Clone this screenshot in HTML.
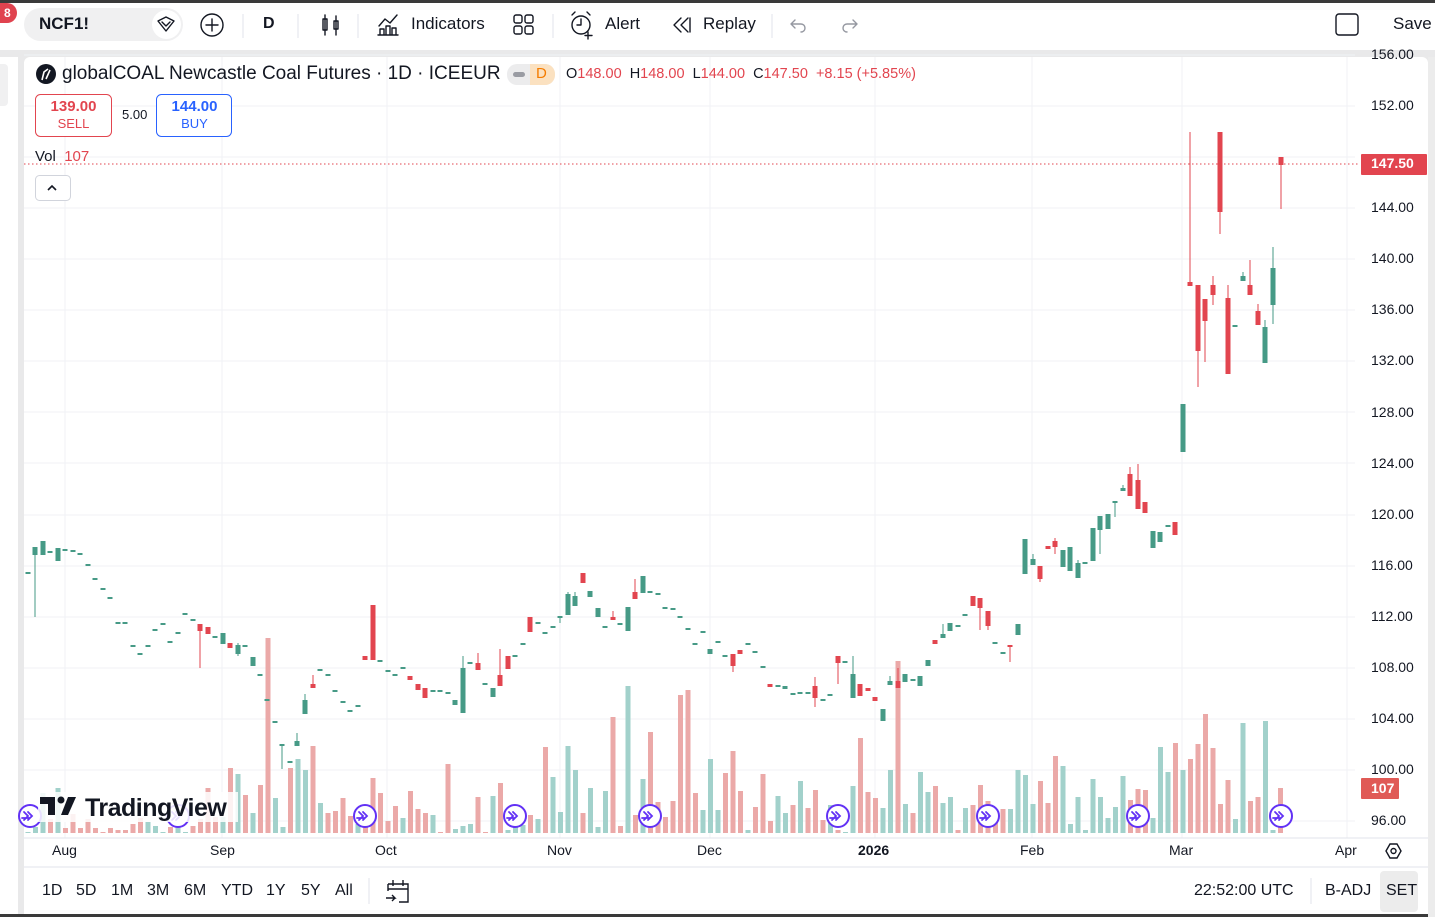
<!DOCTYPE html>
<html><head><meta charset="utf-8"><style>
*{margin:0;padding:0;box-sizing:border-box}
body{width:1435px;height:917px;overflow:hidden;background:#e9e9ea;font-family:"Liberation Sans",sans-serif;color:#131722;position:relative}
.a{position:absolute}
.t{position:absolute;white-space:nowrap}
</style></head><body>
<!-- top bar -->
<div class="a" style="left:0;top:0;width:1435px;height:3px;background:#3a3a3a"></div>
<div class="a" style="left:0;top:3px;width:1435px;height:47px;background:#fff"></div>
<div class="a" style="left:24px;top:8px;width:159px;height:33px;border-radius:17px;background:#f0f0f1"></div>
<div class="t" style="left:39px;top:14px;font-size:17px;font-weight:bold">NCF1!</div>
<div class="a" style="left:152px;top:10px;width:29px;height:29px;border-radius:50%;background:#fff"></div>
<div class="a" style="left:0;top:3px;width:17px;height:20px;border-radius:0 10px 10px 0;background:#e0434f;color:#fff;font-size:12px;font-weight:bold;padding:3px 0 0 4px">8</div>
<div class="t" style="left:263px;top:15px;font-size:16px;font-weight:bold">D</div>
<div class="t" style="left:411px;top:14px;font-size:17px">Indicators</div>
<div class="t" style="left:605px;top:14px;font-size:17px">Alert</div>
<div class="t" style="left:703px;top:14px;font-size:17px">Replay</div>
<div class="t" style="left:1393px;top:14px;font-size:17px">Save</div>
<!-- left panel -->
<div class="a" style="left:0;top:57px;width:18px;height:860px;background:#fff"></div>
<div class="a" style="left:0;top:64px;width:8px;height:42px;background:#f0f0f1;border-radius:0 4px 4px 0"></div>
<!-- chart panel -->
<div class="a" style="left:24px;top:57px;width:1404px;height:858px;background:#fff;border-radius:6px 6px 0 0"></div>
<div class="a" style="left:0;top:914px;width:1435px;height:3px;background:#3a3a3a"></div>

<svg class="a" style="left:0;top:0" width="1435" height="917" xmlns="http://www.w3.org/2000/svg">
<g fill="none" stroke="#131722" stroke-width="1.4" stroke-linecap="round" stroke-linejoin="round">
<path d="M158 21 L166 17 L174 21 L166 31 Z M162 22 L166 26 L170 22" />
<circle cx="212" cy="25" r="11"/><path d="M212 19v12M206 25h12"/>
<path d="M325 15v20M323 19h4v11h-4zM336 16v19M334 21h4v8h-4z"/>
<path d="M378 35h20M380 35v-6h4v6M386 35v-9h4v9M392 35v-7h4v7M379 26l6-7 5 4 7-8"/>
<rect x="514" y="15" width="8" height="8" rx="2"/><rect x="525" y="15" width="8" height="8" rx="2"/><rect x="514" y="26" width="8" height="8" rx="2"/><rect x="525" y="26" width="8" height="8" rx="2"/>
<circle cx="581" cy="25" r="9"/><path d="M581 19v6h-4M572 15l3-3M590 15l-3-3M588 32v7M585 35.5h7"/>
<path d="M681 18l-7 7 7 7M688 18l-7 7 7 7M690 18v14"/>
<path stroke="#9598a1" d="M795 20l-4 4 4 4M791 24h10a4 4 0 0 1 0 8"/>
<path stroke="#9598a1" d="M853 20l4 4-4 4M857 24h-10a4 4 0 0 0 0 8"/>
<rect x="1336" y="14" width="22" height="21" rx="3"/>
</g>
<g stroke="#e0e3eb"><path d="M243 14v24M298 14v24M358 14v24M553 14v24M772 14v24"/></g>
<!-- grid -->
<g stroke="#f0f2f5" stroke-width="1">
<path d="M24 55H1355M24 106H1355M24 157H1355M24 208H1355M24 259H1355M24 310H1355M24 361H1355M24 412H1355M24 463H1355M24 515H1355M24 566H1355M24 617H1355M24 668H1355M24 719H1355M24 770H1355M24 821H1355"/>
<path d="M65 57V838M222 57V838M387 57V838M560 57V838M710 57V838M875 57V838M1032 57V838M1182 57V838M1347 57V838"/>
</g>
<path d="M24 838H1428M24 867H1428" stroke="#e0e3eb"/>
<!-- volume -->
<g fill="#eba9a8" id="vr"></g>
<g>
<rect x="25.5" y="832" width="5" height="1" fill="#a2d1cb"/><rect x="33" y="827" width="5" height="6" fill="#a2d1cb"/><rect x="40.5" y="793" width="5" height="40" fill="#a2d1cb"/><rect x="48" y="819" width="5" height="14" fill="#eba9a8"/><rect x="55.5" y="788" width="5" height="45" fill="#a2d1cb"/><rect x="63" y="828" width="5" height="5" fill="#eba9a8"/><rect x="70.5" y="814" width="5" height="19" fill="#eba9a8"/><rect x="78" y="828" width="5" height="5" fill="#eba9a8"/><rect x="85.5" y="819" width="5" height="14" fill="#eba9a8"/><rect x="93" y="828" width="5" height="5" fill="#eba9a8"/><rect x="100.5" y="832" width="5" height="1" fill="#eba9a8"/><rect x="108" y="828" width="5" height="5" fill="#eba9a8"/><rect x="115.5" y="830" width="5" height="3" fill="#eba9a8"/><rect x="123" y="830" width="5" height="3" fill="#eba9a8"/><rect x="130.5" y="824" width="5" height="9" fill="#eba9a8"/><rect x="138" y="818" width="5" height="15" fill="#eba9a8"/><rect x="145.5" y="822" width="5" height="11" fill="#a2d1cb"/><rect x="153" y="826" width="5" height="7" fill="#a2d1cb"/><rect x="160.5" y="832" width="5" height="1" fill="#a2d1cb"/><rect x="168" y="827" width="5" height="6" fill="#eba9a8"/><rect x="175.5" y="827" width="5" height="6" fill="#a2d1cb"/><rect x="183" y="832" width="5" height="1" fill="#a2d1cb"/><rect x="190.5" y="826" width="5" height="7" fill="#eba9a8"/><rect x="198" y="819" width="5" height="14" fill="#eba9a8"/><rect x="205.5" y="788" width="5" height="45" fill="#eba9a8"/><rect x="213" y="817" width="5" height="16" fill="#eba9a8"/><rect x="220.5" y="817" width="5" height="16" fill="#a2d1cb"/><rect x="228" y="768" width="5" height="65" fill="#eba9a8"/><rect x="235.5" y="774" width="5" height="59" fill="#a2d1cb"/><rect x="243" y="795" width="5" height="38" fill="#eba9a8"/><rect x="250.5" y="813" width="5" height="20" fill="#a2d1cb"/><rect x="258" y="785" width="5" height="48" fill="#eba9a8"/><rect x="265.5" y="638" width="5" height="195" fill="#eba9a8"/><rect x="273" y="798" width="5" height="35" fill="#a2d1cb"/><rect x="280.5" y="827" width="5" height="6" fill="#a2d1cb"/><rect x="288" y="768" width="5" height="65" fill="#eba9a8"/><rect x="295.5" y="759" width="5" height="74" fill="#a2d1cb"/><rect x="303" y="770" width="5" height="63" fill="#a2d1cb"/><rect x="310.5" y="746" width="5" height="87" fill="#eba9a8"/><rect x="318" y="803" width="5" height="30" fill="#a2d1cb"/><rect x="325.5" y="813" width="5" height="20" fill="#eba9a8"/><rect x="333" y="811" width="5" height="22" fill="#eba9a8"/><rect x="340.5" y="798" width="5" height="35" fill="#eba9a8"/><rect x="348" y="816" width="5" height="17" fill="#eba9a8"/><rect x="355.5" y="824" width="5" height="9" fill="#a2d1cb"/><rect x="363" y="822" width="5" height="11" fill="#eba9a8"/><rect x="370.5" y="778" width="5" height="55" fill="#eba9a8"/><rect x="378" y="793" width="5" height="40" fill="#eba9a8"/><rect x="385.5" y="821" width="5" height="12" fill="#eba9a8"/><rect x="393" y="806" width="5" height="27" fill="#eba9a8"/><rect x="400.5" y="818" width="5" height="15" fill="#a2d1cb"/><rect x="408" y="791" width="5" height="42" fill="#eba9a8"/><rect x="415.5" y="809" width="5" height="24" fill="#eba9a8"/><rect x="423" y="813" width="5" height="20" fill="#eba9a8"/><rect x="430.5" y="815" width="5" height="18" fill="#a2d1cb"/><rect x="438" y="832" width="5" height="1" fill="#eba9a8"/><rect x="445.5" y="764" width="5" height="69" fill="#eba9a8"/><rect x="453" y="829" width="5" height="4" fill="#a2d1cb"/><rect x="460.5" y="826" width="5" height="7" fill="#a2d1cb"/><rect x="468" y="824" width="5" height="9" fill="#a2d1cb"/><rect x="475.5" y="797" width="5" height="36" fill="#eba9a8"/><rect x="483" y="832" width="5" height="1" fill="#eba9a8"/><rect x="490.5" y="796" width="5" height="37" fill="#a2d1cb"/><rect x="498" y="783" width="5" height="50" fill="#eba9a8"/><rect x="505.5" y="830" width="5" height="3" fill="#a2d1cb"/><rect x="513" y="827" width="5" height="6" fill="#a2d1cb"/><rect x="520.5" y="825" width="5" height="8" fill="#a2d1cb"/><rect x="528" y="815" width="5" height="18" fill="#eba9a8"/><rect x="535.5" y="819" width="5" height="14" fill="#a2d1cb"/><rect x="543" y="747" width="5" height="86" fill="#eba9a8"/><rect x="550.5" y="777" width="5" height="56" fill="#a2d1cb"/><rect x="558" y="812" width="5" height="21" fill="#a2d1cb"/><rect x="565.5" y="746" width="5" height="87" fill="#a2d1cb"/><rect x="573" y="770" width="5" height="63" fill="#a2d1cb"/><rect x="580.5" y="813" width="5" height="20" fill="#eba9a8"/><rect x="588" y="788" width="5" height="45" fill="#a2d1cb"/><rect x="595.5" y="827" width="5" height="6" fill="#a2d1cb"/><rect x="603" y="791" width="5" height="42" fill="#a2d1cb"/><rect x="610.5" y="717" width="5" height="116" fill="#eba9a8"/><rect x="618" y="826" width="5" height="7" fill="#eba9a8"/><rect x="625.5" y="686" width="5" height="147" fill="#a2d1cb"/><rect x="633" y="815" width="5" height="18" fill="#eba9a8"/><rect x="640.5" y="779" width="5" height="54" fill="#a2d1cb"/><rect x="648" y="732" width="5" height="101" fill="#eba9a8"/><rect x="655.5" y="802" width="5" height="31" fill="#eba9a8"/><rect x="663" y="817" width="5" height="16" fill="#eba9a8"/><rect x="670.5" y="801" width="5" height="32" fill="#eba9a8"/><rect x="678" y="695" width="5" height="138" fill="#eba9a8"/><rect x="685.5" y="690" width="5" height="143" fill="#eba9a8"/><rect x="693" y="793" width="5" height="40" fill="#eba9a8"/><rect x="700.5" y="810" width="5" height="23" fill="#a2d1cb"/><rect x="708" y="759" width="5" height="74" fill="#a2d1cb"/><rect x="715.5" y="810" width="5" height="23" fill="#a2d1cb"/><rect x="723" y="773" width="5" height="60" fill="#eba9a8"/><rect x="730.5" y="751" width="5" height="82" fill="#eba9a8"/><rect x="738" y="791" width="5" height="42" fill="#eba9a8"/><rect x="745.5" y="830" width="5" height="3" fill="#a2d1cb"/><rect x="753" y="807" width="5" height="26" fill="#eba9a8"/><rect x="760.5" y="774" width="5" height="59" fill="#eba9a8"/><rect x="768" y="821" width="5" height="12" fill="#eba9a8"/><rect x="775.5" y="796" width="5" height="37" fill="#a2d1cb"/><rect x="783" y="813" width="5" height="20" fill="#a2d1cb"/><rect x="790.5" y="805" width="5" height="28" fill="#eba9a8"/><rect x="798" y="781" width="5" height="52" fill="#a2d1cb"/><rect x="805.5" y="808" width="5" height="25" fill="#eba9a8"/><rect x="813" y="790" width="5" height="43" fill="#eba9a8"/><rect x="820.5" y="820" width="5" height="13" fill="#eba9a8"/><rect x="828" y="805" width="5" height="28" fill="#a2d1cb"/><rect x="835.5" y="830" width="5" height="3" fill="#eba9a8"/><rect x="843" y="832" width="5" height="1" fill="#a2d1cb"/><rect x="850.5" y="786" width="5" height="47" fill="#a2d1cb"/><rect x="858" y="738" width="5" height="95" fill="#eba9a8"/><rect x="865.5" y="792" width="5" height="41" fill="#eba9a8"/><rect x="873" y="798" width="5" height="35" fill="#eba9a8"/><rect x="880.5" y="808" width="5" height="25" fill="#a2d1cb"/><rect x="888" y="770" width="5" height="63" fill="#a2d1cb"/><rect x="895.5" y="661" width="5" height="172" fill="#eba9a8"/><rect x="903" y="804" width="5" height="29" fill="#a2d1cb"/><rect x="910.5" y="813" width="5" height="20" fill="#eba9a8"/><rect x="918" y="772" width="5" height="61" fill="#a2d1cb"/><rect x="925.5" y="792" width="5" height="41" fill="#a2d1cb"/><rect x="933" y="786" width="5" height="47" fill="#eba9a8"/><rect x="940.5" y="803" width="5" height="30" fill="#a2d1cb"/><rect x="948" y="797" width="5" height="36" fill="#a2d1cb"/><rect x="955.5" y="830" width="5" height="3" fill="#eba9a8"/><rect x="963" y="808" width="5" height="25" fill="#a2d1cb"/><rect x="970.5" y="805" width="5" height="28" fill="#eba9a8"/><rect x="978" y="785" width="5" height="48" fill="#eba9a8"/><rect x="985.5" y="801" width="5" height="32" fill="#eba9a8"/><rect x="993" y="815" width="5" height="18" fill="#eba9a8"/><rect x="1000.5" y="809" width="5" height="24" fill="#eba9a8"/><rect x="1008" y="809" width="5" height="24" fill="#a2d1cb"/><rect x="1015.5" y="770" width="5" height="63" fill="#a2d1cb"/><rect x="1023" y="775" width="5" height="58" fill="#a2d1cb"/><rect x="1030.5" y="804" width="5" height="29" fill="#a2d1cb"/><rect x="1038" y="781" width="5" height="52" fill="#eba9a8"/><rect x="1045.5" y="803" width="5" height="30" fill="#eba9a8"/><rect x="1053" y="756" width="5" height="77" fill="#eba9a8"/><rect x="1060.5" y="766" width="5" height="67" fill="#a2d1cb"/><rect x="1068" y="824" width="5" height="9" fill="#a2d1cb"/><rect x="1075.5" y="797" width="5" height="36" fill="#a2d1cb"/><rect x="1083" y="830" width="5" height="3" fill="#a2d1cb"/><rect x="1090.5" y="779" width="5" height="54" fill="#a2d1cb"/><rect x="1098" y="797" width="5" height="36" fill="#a2d1cb"/><rect x="1105.5" y="818" width="5" height="15" fill="#a2d1cb"/><rect x="1113" y="807" width="5" height="26" fill="#a2d1cb"/><rect x="1120.5" y="776" width="5" height="57" fill="#a2d1cb"/><rect x="1128" y="800" width="5" height="33" fill="#eba9a8"/><rect x="1135.5" y="789" width="5" height="44" fill="#eba9a8"/><rect x="1143" y="790" width="5" height="43" fill="#eba9a8"/><rect x="1150.5" y="818" width="5" height="15" fill="#a2d1cb"/><rect x="1158" y="747" width="5" height="86" fill="#a2d1cb"/><rect x="1165.5" y="772" width="5" height="61" fill="#a2d1cb"/><rect x="1173" y="743" width="5" height="90" fill="#eba9a8"/><rect x="1180.5" y="770" width="5" height="63" fill="#a2d1cb"/><rect x="1188" y="759" width="5" height="74" fill="#eba9a8"/><rect x="1195.5" y="744" width="5" height="89" fill="#eba9a8"/><rect x="1203" y="714" width="5" height="119" fill="#eba9a8"/><rect x="1210.5" y="748" width="5" height="85" fill="#eba9a8"/><rect x="1218" y="804" width="5" height="29" fill="#eba9a8"/><rect x="1225.5" y="780" width="5" height="53" fill="#eba9a8"/><rect x="1233" y="819" width="5" height="14" fill="#a2d1cb"/><rect x="1240.5" y="723" width="5" height="110" fill="#a2d1cb"/><rect x="1248" y="801" width="5" height="32" fill="#eba9a8"/><rect x="1255.5" y="797" width="5" height="36" fill="#eba9a8"/><rect x="1263" y="721" width="5" height="112" fill="#a2d1cb"/><rect x="1270.5" y="830" width="5" height="3" fill="#a2d1cb"/><rect x="1278" y="788" width="5" height="45" fill="#eba9a8"/>
</g>
<!-- candles -->
<g id="c"></g>
<g fill="#469a86">
<rect x="25.5" y="572" width="5" height="2"/>
<rect x="32.5" y="547" width="5" height="8"/><rect x="34.5" y="555" width="1" height="62"/>
<rect x="40.5" y="541" width="5" height="14"/><rect x="47.5" y="551" width="5" height="2"/>
<rect x="55.5" y="548" width="5" height="13"/>
<rect x="62.5" y="549" width="5" height="2"/><rect x="70.5" y="550" width="5" height="2"/><rect x="77.5" y="553" width="5" height="2"/><rect x="85.5" y="564" width="5" height="2"/><rect x="92.5" y="578" width="5" height="2"/><rect x="100.5" y="588" width="5" height="2"/><rect x="107.5" y="597" width="5" height="2"/><rect x="115.5" y="622" width="5" height="2"/><rect x="122.5" y="622" width="5" height="2"/><rect x="130.5" y="645" width="5" height="2"/><rect x="137.5" y="653" width="5" height="2"/><rect x="145.5" y="645" width="5" height="2"/><rect x="152.5" y="629" width="5" height="2"/><rect x="160.5" y="623" width="5" height="2"/><rect x="167.5" y="641" width="5" height="2"/><rect x="175.5" y="632" width="5" height="2"/><rect x="182.5" y="613" width="5" height="2"/><rect x="190.5" y="619" width="5" height="2"/>
<rect x="212.5" y="636" width="5" height="2"/><rect x="220.5" y="633" width="5" height="11"/>
<rect x="235.5" y="645" width="5" height="9"/><rect x="237.5" y="643" width="1" height="13"/><rect x="242.5" y="645" width="5" height="2"/>
<rect x="250.5" y="657" width="5" height="9"/><rect x="257.5" y="674" width="5" height="2"/><rect x="264.5" y="699" width="5" height="2"/><rect x="272.5" y="721" width="5" height="2"/>
<rect x="279.5" y="744" width="5" height="2"/><rect x="281.5" y="744" width="1" height="25"/><rect x="287.5" y="761" width="5" height="2"/>
<rect x="294.5" y="741" width="5" height="5"/><rect x="296.5" y="733" width="1" height="10"/>
<rect x="302.5" y="700" width="5" height="14"/><rect x="304.5" y="694" width="1" height="8"/>
<rect x="317.5" y="669" width="5" height="2"/><rect x="325.5" y="674" width="5" height="2"/><rect x="332.5" y="690" width="5" height="2"/><rect x="340.5" y="701" width="5" height="2"/><rect x="347.5" y="710" width="5" height="2"/><rect x="355.5" y="705" width="5" height="2"/>
<rect x="377.5" y="660" width="5" height="2"/><rect x="385.5" y="670" width="5" height="2"/><rect x="392.5" y="674" width="5" height="2"/><rect x="400.5" y="667" width="5" height="2"/>
<rect x="430.5" y="690" width="5" height="2"/><rect x="437.5" y="690" width="5" height="2"/><rect x="445.5" y="692" width="5" height="2"/>
<rect x="452.5" y="700" width="5" height="5"/><rect x="460.5" y="668" width="5" height="45"/><rect x="462.5" y="656" width="1" height="12"/>
<rect x="467.5" y="662" width="5" height="2"/><rect x="482.5" y="683" width="5" height="2"/><rect x="490.5" y="688" width="5" height="9"/>
<rect x="512.5" y="655" width="5" height="2"/><rect x="520.5" y="643" width="5" height="2"/><rect x="535.5" y="622" width="5" height="2"/><rect x="542.5" y="632" width="5" height="2"/><rect x="550.5" y="626" width="5" height="2"/><rect x="557.5" y="616" width="5" height="2"/><rect x="559.5" y="616" width="1" height="7"/>
<rect x="565.5" y="594" width="5" height="21"/><rect x="567.5" y="592" width="1" height="3"/><rect x="572.5" y="596" width="5" height="10"/><rect x="574.5" y="592" width="1" height="4"/>
<rect x="587.5" y="591" width="5" height="6"/><rect x="595.5" y="608" width="5" height="9"/><rect x="602.5" y="626" width="5" height="2"/><rect x="617.5" y="623" width="5" height="2"/><rect x="625.5" y="607" width="5" height="24"/>
<rect x="640.5" y="576" width="5" height="17"/><rect x="647.5" y="591" width="5" height="2"/><rect x="655.5" y="593" width="5" height="2"/><rect x="662.5" y="607" width="5" height="2"/><rect x="670.5" y="608" width="5" height="2"/><rect x="677.5" y="616" width="5" height="2"/><rect x="685.5" y="628" width="5" height="2"/><rect x="692.5" y="643" width="5" height="2"/><rect x="700.5" y="631" width="5" height="2"/>
<rect x="707.5" y="649" width="5" height="5"/><rect x="715.5" y="641" width="5" height="2"/><rect x="722.5" y="655" width="5" height="2"/><rect x="745.5" y="643" width="5" height="2"/><rect x="752.5" y="651" width="5" height="2"/><rect x="760.5" y="666" width="5" height="2"/>
<rect x="775.5" y="685" width="5" height="2"/><rect x="782.5" y="686" width="5" height="3"/><rect x="790.5" y="693" width="5" height="2"/><rect x="797.5" y="692" width="5" height="2"/><rect x="805.5" y="692" width="5" height="2"/><rect x="820.5" y="699" width="5" height="2"/><rect x="827.5" y="694" width="5" height="2"/><rect x="842.5" y="661" width="5" height="2"/>
<rect x="850.5" y="674" width="5" height="24"/><rect x="852.5" y="656" width="1" height="18"/>
<rect x="880.5" y="709" width="5" height="12"/><rect x="887.5" y="681" width="5" height="4"/><rect x="889.5" y="676" width="1" height="5"/>
<rect x="902.5" y="674" width="5" height="8"/><rect x="910.5" y="679" width="5" height="2"/><rect x="917.5" y="676" width="5" height="10"/><rect x="925.5" y="660" width="5" height="6"/>
<rect x="940.5" y="634" width="5" height="4"/><rect x="942.5" y="624" width="1" height="10"/><rect x="947.5" y="623" width="5" height="8"/><rect x="955.5" y="625" width="5" height="2"/><rect x="962.5" y="614" width="5" height="2"/>
<rect x="992.5" y="642" width="5" height="2"/><rect x="1000.5" y="652" width="5" height="2"/>
<rect x="1015.5" y="624" width="5" height="11"/><rect x="1022.5" y="539" width="5" height="35"/><rect x="1030.5" y="559" width="5" height="6"/><rect x="1032.5" y="554" width="1" height="5"/>
<rect x="1060.5" y="550" width="5" height="17"/><rect x="1067.5" y="547" width="5" height="24"/><rect x="1075.5" y="563" width="5" height="15"/><rect x="1077.5" y="560" width="1" height="3"/><rect x="1082.5" y="562" width="5" height="2"/>
<rect x="1090.5" y="528" width="5" height="33"/><rect x="1097.5" y="516" width="5" height="14"/><rect x="1099.5" y="530" width="1" height="24"/><rect x="1105.5" y="514" width="5" height="15"/>
<rect x="1112.5" y="501" width="5" height="2"/><rect x="1114.5" y="501" width="1" height="16"/><rect x="1120.5" y="488" width="5" height="3"/><rect x="1122.5" y="485" width="1" height="3"/>
<rect x="1150.5" y="531" width="5" height="17"/><rect x="1157.5" y="532" width="5" height="10"/><rect x="1165.5" y="525" width="5" height="2"/>
<rect x="1180.5" y="404" width="5" height="48"/><rect x="1232.5" y="325" width="5" height="2"/><rect x="1240.5" y="276" width="5" height="5"/><rect x="1242.5" y="272" width="1" height="4"/>
<rect x="1262.5" y="327" width="5" height="36"/><rect x="1264.5" y="320" width="1" height="7"/>
<rect x="1270.5" y="268" width="5" height="37"/><rect x="1272.5" y="247" width="1" height="77"/>
</g>
<g fill="#e2454f">
<rect x="197.5" y="624" width="5" height="7"/><rect x="199.5" y="631" width="1" height="37"/>
<rect x="205.5" y="627" width="5" height="7"/><rect x="227.5" y="643" width="5" height="5"/>
<rect x="310.5" y="684" width="5" height="4"/><rect x="312.5" y="675" width="1" height="9"/>
<rect x="362.5" y="656" width="5" height="4"/><rect x="370.5" y="605" width="5" height="55"/>
<rect x="407.5" y="676" width="5" height="4"/><rect x="415.5" y="684" width="5" height="6"/><rect x="422.5" y="688" width="5" height="10"/>
<rect x="475.5" y="663" width="5" height="7"/><rect x="477.5" y="653" width="1" height="10"/>
<rect x="497.5" y="675" width="5" height="11"/><rect x="499.5" y="649" width="1" height="26"/><rect x="505.5" y="656" width="5" height="13"/>
<rect x="527.5" y="617" width="5" height="15"/><rect x="580.5" y="573" width="5" height="10"/>
<rect x="610.5" y="617" width="5" height="3"/><rect x="612.5" y="611" width="1" height="6"/>
<rect x="632.5" y="592" width="5" height="7"/><rect x="634.5" y="579" width="1" height="13"/>
<rect x="730.5" y="654" width="5" height="12"/><rect x="732.5" y="666" width="1" height="6"/><rect x="737.5" y="650" width="5" height="4"/>
<rect x="767.5" y="684" width="5" height="3"/>
<rect x="812.5" y="686" width="5" height="12"/><rect x="814.5" y="677" width="1" height="30"/>
<rect x="835.5" y="656" width="5" height="7"/><rect x="837.5" y="663" width="1" height="21"/>
<rect x="857.5" y="684" width="5" height="12"/><rect x="865.5" y="688" width="5" height="3"/><rect x="872.5" y="697" width="5" height="4"/>
<rect x="895.5" y="681" width="5" height="7"/><rect x="897.5" y="668" width="1" height="13"/>
<rect x="932.5" y="640" width="5" height="4"/>
<rect x="970.5" y="596" width="5" height="10"/><rect x="977.5" y="598" width="5" height="10"/><rect x="979.5" y="608" width="1" height="22"/>
<rect x="985.5" y="611" width="5" height="15"/><rect x="987.5" y="626" width="1" height="4"/>
<rect x="1007.5" y="645" width="5" height="2"/><rect x="1009.5" y="645" width="1" height="17"/>
<rect x="1037.5" y="566" width="5" height="13"/><rect x="1039.5" y="579" width="1" height="3"/><rect x="1045.5" y="546" width="5" height="3"/>
<rect x="1052.5" y="541" width="5" height="6"/><rect x="1054.5" y="538" width="1" height="16"/>
<rect x="1127.5" y="474" width="5" height="22"/><rect x="1129.5" y="467" width="1" height="7"/>
<rect x="1135.5" y="480" width="5" height="29"/><rect x="1137.5" y="464" width="1" height="16"/>
<rect x="1142.5" y="502" width="5" height="11"/><rect x="1172.5" y="522" width="5" height="13"/>
<rect x="1187.5" y="282" width="5" height="4"/><rect x="1189.5" y="132" width="1" height="150"/>
<rect x="1195.5" y="285" width="5" height="66"/><rect x="1197.5" y="351" width="1" height="36"/>
<rect x="1202.5" y="299" width="5" height="22"/><rect x="1204.5" y="321" width="1" height="41"/>
<rect x="1210.5" y="285" width="5" height="10"/><rect x="1212.5" y="276" width="1" height="29"/>
<rect x="1217.5" y="132" width="5" height="80"/><rect x="1219.5" y="212" width="1" height="22"/>
<rect x="1225.5" y="298" width="5" height="76"/><rect x="1227.5" y="285" width="1" height="13"/>
<rect x="1247.5" y="285" width="5" height="10"/><rect x="1249.5" y="260" width="1" height="25"/>
<rect x="1255.5" y="311" width="5" height="14"/><rect x="1257.5" y="304" width="1" height="7"/>
<rect x="1278.5" y="157" width="5" height="8"/><rect x="1280.5" y="165" width="1" height="44"/>
</g>
<line x1="24" y1="164" x2="1360" y2="164" stroke="#e2454f" stroke-width="1" stroke-dasharray="1.5 2.5"/>
<!-- event markers -->
<g fill="#fff" stroke="#6231f5" stroke-width="2">
<circle cx="30" cy="816" r="11"/><circle cx="178" cy="816" r="11"/><circle cx="365" cy="816" r="11"/><circle cx="515" cy="816" r="11"/><circle cx="650" cy="816" r="11"/><circle cx="838" cy="816" r="11"/><circle cx="988" cy="816" r="11"/><circle cx="1138" cy="816" r="11"/><circle cx="1281" cy="816" r="11"/>
</g>
<g fill="none" stroke="#6231f5" stroke-width="1.8" stroke-linecap="round">
<path d="M24 812l4 4-4 4M28 812l4 4-4 4M22 818h8"/><path d="M172 812l4 4-4 4M176 812l4 4-4 4"/><path d="M359 812l4 4-4 4M363 812l4 4-4 4M357 818h8"/><path d="M509 812l4 4-4 4M513 812l4 4-4 4M507 818h8"/><path d="M644 812l4 4-4 4M648 812l4 4-4 4M642 818h8"/><path d="M832 812l4 4-4 4M836 812l4 4-4 4M830 818h8"/><path d="M982 812l4 4-4 4M986 812l4 4-4 4M980 818h8"/><path d="M1132 812l4 4-4 4M1136 812l4 4-4 4M1130 818h8"/><path d="M1275 812l4 4-4 4M1279 812l4 4-4 4M1273 818h8"/>
</g>
<!-- tradingview logo -->
<rect x="38" y="792" width="200" height="30" fill="#fff" opacity="0.85"/>
<g fill="#131722"><path d="M40 797h15v18h-7v-11h-8z"/><circle cx="61" cy="800" r="3.5"/><path d="M68 797h8l-8 18h-7z"/></g>
<text x="85" y="816" font-family="Liberation Sans,sans-serif" font-size="25" font-weight="bold" fill="#131722" letter-spacing="-0.5">TradingView</text>
<!-- legend icon -->
<circle cx="46" cy="74" r="10" fill="#131722"/><path d="M42 80l2-8 4-3M46 79l4-9" stroke="#fff" stroke-width="1.6" fill="none"/>
<rect x="507" y="64" width="48" height="21" rx="10" fill="#ececed"/><rect x="530" y="64" width="25" height="21" rx="10" fill="#fbe1c0"/><rect x="530" y="64" width="8" height="21" fill="#fbe1c0"/>
<rect x="513" y="72" width="12" height="5" rx="2.5" fill="#9a9ca3"/>
<!-- sell/buy -->
<rect x="35.5" y="94.5" width="76" height="42" rx="5" fill="#fff" stroke="#e2454f"/>
<rect x="156.5" y="94.5" width="75" height="42" rx="5" fill="#fff" stroke="#2962ff"/>
<rect x="35.5" y="175.5" width="35" height="25" rx="4" fill="#fff" stroke="#d1d4dc"/>
<path d="M48 190l4-4 4 4" stroke="#131722" stroke-width="1.6" fill="none"/>
<!-- price labels -->
<rect x="1361" y="154" width="66" height="21" rx="1" fill="#e2454f"/>
<rect x="1361" y="778" width="38" height="21" rx="1" fill="#e05a56"/>
<!-- bottom icons -->
<g fill="none" stroke="#131722" stroke-width="1.4"><path d="M1386 851l4-7h7l4 7-4 7h-7z"/><circle cx="1393.5" cy="851" r="2.5"/>
<path d="M388 884h20v18h-9M388 884v7M388 889h20M393 880v6M403 880v6M386 898h9l-3-3M395 898l-3 3"/></g>
<path d="M369 878v26M1311 878v26" stroke="#e0e3eb"/>
<rect x="1380" y="871" width="38" height="41" rx="4" fill="#ececec"/>
<rect x="1428" y="57" width="7" height="860" fill="#ececec"/>
</svg>

<div class="t" style="left:62px;top:63px;font-size:19px">globalCOAL Newcastle Coal Futures · 1D · ICEEUR</div>
<div class="t" style="left:536px;top:65px;font-size:15px;color:#f57c00">D</div>
<div class="t" style="left:566px;top:66px;font-size:14.5px">O<span style="color:#e2454f">148.00</span>&nbsp; H<span style="color:#e2454f">148.00</span>&nbsp; L<span style="color:#e2454f">144.00</span>&nbsp; C<span style="color:#e2454f">147.50&nbsp; +8.15 (+5.85%)</span></div>
<div class="t" style="left:35px;top:98px;width:77px;text-align:center;font-size:15px;color:#e2454f;font-weight:bold">139.00</div>
<div class="t" style="left:35px;top:116px;width:77px;text-align:center;font-size:13px;color:#e2454f">SELL</div>
<div class="t" style="left:122px;top:107px;font-size:13px">5.00</div>
<div class="t" style="left:157px;top:98px;width:75px;text-align:center;font-size:15px;color:#2962ff;font-weight:bold">144.00</div>
<div class="t" style="left:157px;top:116px;width:75px;text-align:center;font-size:13px;color:#2962ff">BUY</div>
<div class="t" style="left:35px;top:148px;font-size:15px">Vol&nbsp; <span style="color:#e2454f">107</span></div>

<div class="t" style="left:1371px;top:46px;font-size:14px">156.00</div>
<div class="t" style="left:1371px;top:97px;font-size:14px">152.00</div>
<div class="t" style="left:1371px;top:199px;font-size:14px">144.00</div>
<div class="t" style="left:1371px;top:250px;font-size:14px">140.00</div>
<div class="t" style="left:1371px;top:301px;font-size:14px">136.00</div>
<div class="t" style="left:1371px;top:352px;font-size:14px">132.00</div>
<div class="t" style="left:1371px;top:404px;font-size:14px">128.00</div>
<div class="t" style="left:1371px;top:455px;font-size:14px">124.00</div>
<div class="t" style="left:1371px;top:506px;font-size:14px">120.00</div>
<div class="t" style="left:1371px;top:557px;font-size:14px">116.00</div>
<div class="t" style="left:1371px;top:608px;font-size:14px">112.00</div>
<div class="t" style="left:1371px;top:659px;font-size:14px">108.00</div>
<div class="t" style="left:1371px;top:710px;font-size:14px">104.00</div>
<div class="t" style="left:1371px;top:761px;font-size:14px">100.00</div>
<div class="t" style="left:1371px;top:812px;font-size:14px">96.00</div>
<div class="t" style="left:1371px;top:155px;font-size:14px;color:#fff;font-weight:bold">147.50</div>
<div class="t" style="left:1371px;top:780px;font-size:14px;color:#fff;font-weight:bold">107</div>

<div class="t" style="left:52px;top:842px;font-size:14px">Aug</div>
<div class="t" style="left:210px;top:842px;font-size:14px">Sep</div>
<div class="t" style="left:375px;top:842px;font-size:14px">Oct</div>
<div class="t" style="left:547px;top:842px;font-size:14px">Nov</div>
<div class="t" style="left:697px;top:842px;font-size:14px">Dec</div>
<div class="t" style="left:858px;top:842px;font-size:14px;font-weight:bold">2026</div>
<div class="t" style="left:1020px;top:842px;font-size:14px">Feb</div>
<div class="t" style="left:1169px;top:842px;font-size:14px">Mar</div>
<div class="t" style="left:1335px;top:842px;font-size:14px">Apr</div>

<div class="t" style="left:42px;top:882px;font-size:16px;word-spacing:0">1D</div>
<div class="t" style="left:76px;top:882px;font-size:16px">5D</div>
<div class="t" style="left:111px;top:882px;font-size:16px">1M</div>
<div class="t" style="left:147px;top:882px;font-size:16px">3M</div>
<div class="t" style="left:184px;top:882px;font-size:16px">6M</div>
<div class="t" style="left:221px;top:882px;font-size:16px">YTD</div>
<div class="t" style="left:266px;top:882px;font-size:16px">1Y</div>
<div class="t" style="left:301px;top:882px;font-size:16px">5Y</div>
<div class="t" style="left:335px;top:882px;font-size:16px">All</div>
<div class="t" style="left:1194px;top:882px;font-size:16px">22:52:00 UTC</div>
<div class="t" style="left:1325px;top:882px;font-size:16px">B-ADJ</div>
<div class="t" style="left:1386px;top:882px;font-size:16px">SET</div>
</body></html>
